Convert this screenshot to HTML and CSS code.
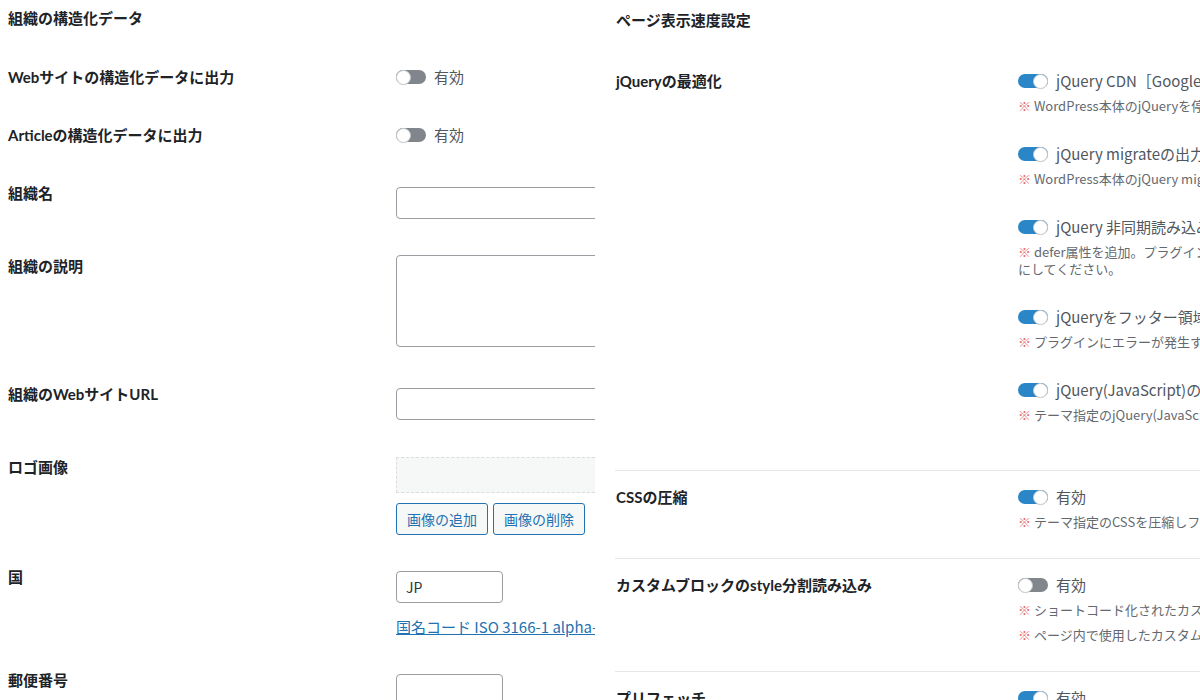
FILE: index.html
```html
<!DOCTYPE html>
<html lang="ja">
<head>
<meta charset="utf-8">
<title>設定</title>
<link rel="stylesheet" href="styles.css">
</head>
<body>
<div class="page">
  <section class="panel panel-left">
    <h2 class="panel-title">組織の構造化データ</h2>
    <div class="form">
      <div class="frow">
        <div class="flabel">Webサイトの構造化データに出力</div>
        <div class="ffield">
          <label class="toggle"><span class="track"><span class="knob"></span></span><span class="toggle-text">有効</span></label>
        </div>
      </div>
      <div class="frow">
        <div class="flabel">Articleの構造化データに出力</div>
        <div class="ffield">
          <label class="toggle"><span class="track"><span class="knob"></span></span><span class="toggle-text">有効</span></label>
        </div>
      </div>
      <div class="frow">
        <div class="flabel">組織名</div>
        <div class="ffield"><input class="input input-wide" type="text" value=""></div>
      </div>
      <div class="frow">
        <div class="flabel">組織の説明</div>
        <div class="ffield"><textarea class="textarea"></textarea></div>
      </div>
      <div class="frow">
        <div class="flabel">組織のWebサイトURL</div>
        <div class="ffield"><input class="input input-wide" type="text" value=""></div>
      </div>
      <div class="frow frow-logo">
        <div class="flabel">ロゴ画像</div>
        <div class="ffield">
          <div class="logo-box"></div>
          <div class="btns">
            <button class="btn" type="button">画像の追加</button>
            <button class="btn" type="button">画像の削除</button>
          </div>
        </div>
      </div>
      <div class="frow frow-country">
        <div class="flabel">国</div>
        <div class="ffield">
          <input class="input input-short" type="text" value="JP">
          <a class="link" href="#">国名コード ISO 3166-1 alpha-2</a>
        </div>
      </div>
      <div class="frow">
        <div class="flabel">郵便番号</div>
        <div class="ffield"><input class="input input-short" type="text" value=""></div>
      </div>
    </div>
  </section>

  <section class="panel panel-right">
    <h2 class="panel-title">ページ表示速度設定</h2>
    <div class="srows">
      <div class="srow srow-first">
        <div class="slabel">jQueryの最適化</div>
        <div class="sfield">
          <div class="opt">
            <label class="toggle"><span class="track on"><span class="knob"></span></span><span class="toggle-text">jQuery CDN［Google］から読み込む</span></label>
            <p class="note"><span class="mark">※</span> WordPress本体のjQueryを停止し、CDNから読み込みます。</p>
          </div>
          <div class="opt">
            <label class="toggle"><span class="track on"><span class="knob"></span></span><span class="toggle-text">jQuery migrateの出力を停止</span></label>
            <p class="note"><span class="mark">※</span> WordPress本体のjQuery migrateを読み込みません。</p>
          </div>
          <div class="opt">
            <label class="toggle"><span class="track on"><span class="knob"></span></span><span class="toggle-text">jQuery 非同期読み込み（defer）</span></label>
            <p class="note"><span class="mark">※</span> defer属性を追加。プラグインでエラーが発生する場合は無効<br>にしてください。</p>
          </div>
          <div class="opt">
            <label class="toggle"><span class="track on"><span class="knob"></span></span><span class="toggle-text">jQueryをフッター領域で読み込む</span></label>
            <p class="note"><span class="mark">※</span> プラグインにエラーが発生する場合は無効にしてください。</p>
          </div>
          <div class="opt">
            <label class="toggle"><span class="track on"><span class="knob"></span></span><span class="toggle-text">jQuery(JavaScript)の圧縮</span></label>
            <p class="note"><span class="mark">※</span> テーマ指定のjQuery(JavaScript)を圧縮します。</p>
          </div>
        </div>
      </div>
      <div class="srow">
        <div class="slabel">CSSの圧縮</div>
        <div class="sfield">
          <div class="opt">
            <label class="toggle"><span class="track on"><span class="knob"></span></span><span class="toggle-text">有効</span></label>
            <p class="note"><span class="mark">※</span> テーマ指定のCSSを圧縮しファイルサイズを削減します。</p>
          </div>
        </div>
      </div>
      <div class="srow">
        <div class="slabel">カスタムブロックのstyle分割読み込み</div>
        <div class="sfield">
          <div class="opt">
            <label class="toggle"><span class="track"><span class="knob"></span></span><span class="toggle-text">有効</span></label>
            <p class="note"><span class="mark">※</span> ショートコード化されたカスタムブロックは対象外です。</p>
            <p class="note note-next"><span class="mark">※</span> ページ内で使用したカスタムブロックのCSSのみ読み込みます。</p>
          </div>
        </div>
      </div>
      <div class="srow">
        <div class="slabel">プリフェッチ</div>
        <div class="sfield">
          <div class="opt">
            <label class="toggle"><span class="track on"><span class="knob"></span></span><span class="toggle-text">有効</span></label>
            <p class="note"><span class="mark">※</span> リンク先のページを事前に読み込みます。</p>
          </div>
        </div>
      </div>
    </div>
  </section>
</div>
</body>
</html>
```

FILE: styles.css
```css
html, body {
  margin: 0;
  padding: 0;
  background: #ffffff;
  overflow: hidden;
  height: 100%;
}

body {
  font-family: "Noto Sans CJK JP", "Noto Sans", sans-serif;
  color: #1d2327;
}

.page {
  display: flex;
  gap: 20px;
  width: 1400px;
  align-items: flex-start;
}

.panel {
  overflow: hidden;
}

.panel-left {
  flex: 0 0 595px;
  width: 595px;
  padding: 7px 0 0 8px;
  box-sizing: border-box;
}

.panel-right {
  flex: 0 0 785px;
  padding-top: 9px;
}

.panel-title {
  margin: 0;
  font-family: Lato, "Noto Sans CJK JP", sans-serif;
  font-weight: 700;
  font-size: 15px;
  line-height: 22px;
  color: #1d2327;
}

.panel-left .panel-title {
  margin-bottom: 19px;
}

.panel-right .panel-title {
  margin-bottom: 23px;
  padding-left: 1px;
}

/* left form */
.frow {
  display: grid;
  grid-template-columns: 388px 1fr;
}

.flabel {
  padding-top: 18px;
  font-family: Lato, "Noto Sans CJK JP", sans-serif;
  font-weight: 700;
  font-size: 15px;
  line-height: 22px;
  color: #1d2327;
}

.ffield {
  padding: 18px 0;
  min-width: 0;
}

.frow-logo .ffield {
  padding-bottom: 13px;
}

.frow-country .ffield {
  padding-bottom: 13px;
}

.input,
.textarea {
  display: block;
  box-sizing: border-box;
  border: 1px solid #9a9da1;
  border-radius: 4px;
  background: #ffffff;
  font-family: "Noto Sans CJK JP", sans-serif;
  font-size: 14px;
  color: #2c3338;
  padding: 0 9px;
  margin: 0;
  outline: none;
}

.input {
  height: 32px;
  margin-top: 5px;
}

.input-wide {
  width: 420px;
}

.input-short {
  width: 107px;
}

.textarea {
  width: 420px;
  height: 92px;
  resize: none;
}

.logo-box {
  box-sizing: border-box;
  width: 420px;
  height: 36px;
  margin-top: 1px;
  background: #f6f7f7;
  border: 1px dashed #dcdcde;
}

.btns {
  display: flex;
  gap: 5px;
  margin-top: 10px;
}

.btn {
  box-sizing: border-box;
  height: 32px;
  padding: 0 10px;
  border: 1px solid #2271b1;
  border-radius: 3px;
  background: #f6f7f7;
  color: #2271b1;
  font-family: "Noto Sans CJK JP", sans-serif;
  font-size: 14px;
  line-height: 30px;
  cursor: pointer;
}

.link {
  display: block;
  margin-top: 13px;
  font-size: 15px;
  line-height: 22px;
  color: #2271b1;
  text-decoration: underline;
  white-space: nowrap;
}

/* toggle */
.toggle {
  display: flex;
  width: max-content;
  align-items: center;
  gap: 8px;
  height: 22px;
  white-space: nowrap;
}

.track {
  display: flex;
  justify-content: flex-start;
  align-items: center;
  box-sizing: border-box;
  width: 30px;
  height: 14px;
  border-radius: 7px;
  background: #80868b;
}

.track.on {
  justify-content: flex-end;
  background: #2a86c6;
}

.knob {
  display: block;
  box-sizing: border-box;
  width: 15px;
  height: 15px;
  border-radius: 50%;
  background: #ffffff;
  border: 1px solid #c9cccf;
  box-shadow: 0 0 1px rgba(0, 0, 0, 0.15);
}

.toggle-text {
  font-size: 15px;
  line-height: 22px;
  color: #50575e;
}

/* right settings */
.srow {
  display: grid;
  grid-template-columns: 403px 1fr;
  border-top: 1px solid #e6e7e8;
}

.srow-first {
  border-top-color: transparent;
  padding-bottom: 19px;
}

.slabel {
  padding: 15px 0 0 1px;
  font-family: Lato, "Noto Sans CJK JP", sans-serif;
  font-weight: 700;
  font-size: 15px;
  line-height: 22px;
  color: #1d2327;
  white-space: nowrap;
}

.sfield {
  padding-top: 14px;
  min-width: 0;
}

.opt {
  margin-bottom: 28px;
}

.opt .toggle {
  height: 24px;
}

.note {
  margin: 4px 0 0;
  font-size: 13px;
  line-height: 17px;
  color: #646970;
  white-space: nowrap;
}

.note-next {
  margin-top: 8px;
}

.mark {
  color: #e57373;
}
```
